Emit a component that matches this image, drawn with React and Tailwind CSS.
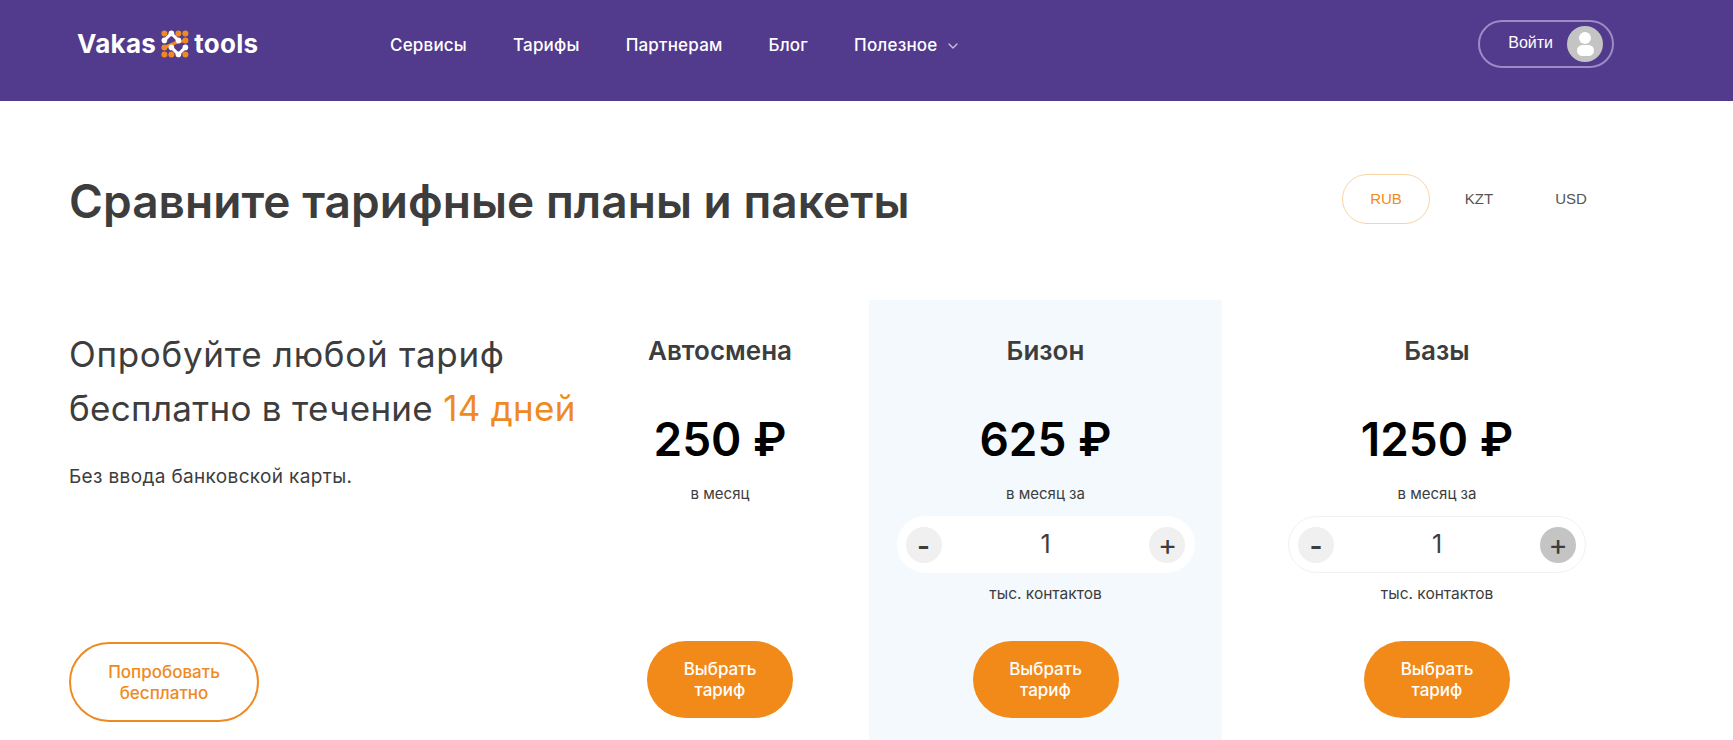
import { ChevronDown } from 'lucide-react';

const navItems = ['Сервисы', 'Тарифы', 'Партнерам', 'Блог'];

// Логотип: оранжевые точки, белые уголки сверху и снизу, оранжевая связь в центре
const LogoMark = () => {
  const orange = [
    [3.4, 3.4], [17.4, 3.4], [24.4, 3.4], [24.4, 10.4], [3.4, 17.4], [3.4, 24.4], [10.4, 24.4], [24.4, 24.4],
  ];
  const white = [
    [3.4, 10.4], [10.4, 3.4], [17.4, 10.4], [10.4, 17.4], [17.4, 24.4], [24.4, 17.4],
  ];
  return (
    <svg width="28" height="28" viewBox="0 0 28 28" className="mx-[5px] shrink-0">
      <path d="M24.4 10.4 L14 13 L3.4 17.4" stroke="#ef8a22" strokeWidth="3" fill="none" />
      <path d="M3.4 10.4 L10.4 3.4 L17.4 10.4 M10.4 17.4 L17.4 24.4 L24.4 17.4" stroke="#fff" strokeWidth="3" fill="none" />
      {orange.map(([x, y]) => (
        <circle key={`o${x}${y}`} cx={x} cy={y} r="3" fill="#ef8a22" />
      ))}
      {white.map(([x, y]) => (
        <circle key={`w${x}${y}`} cx={x} cy={y} r="2.8" fill="#fff" />
      ))}
    </svg>
  );
};

const Stepper = ({ active = false, border = false }) => (
  <div className={`mt-[10px] flex h-[57px] w-[298px] items-center justify-between rounded-full bg-white px-[9px] ${border ? 'border border-[#f1f1f1]' : ''}`}>
    <span className="flex h-9 w-9 items-center justify-center rounded-full bg-[#f0f0f0] pt-[3px] text-[28px] font-semibold leading-none text-[#3d3d3d]">-</span>
    <span className="text-[25px] text-[#3d3d3d]">1</span>
    <span className={`flex h-9 w-9 items-center justify-center rounded-full text-[29px] leading-none text-[#3d3d3d] ${active ? 'bg-[#c4c4c4]' : 'bg-[#f0f0f0]'}`}>+</span>
  </div>
);

const SelectButton = () => (
  <button className="h-[77px] w-[146px] rounded-full bg-[#f28a1a] pt-[1px] text-[17px] font-medium leading-[21px] text-white">
    Выбрать<br />тариф
  </button>
);

const PlanColumn = ({ name, price, per, stepper, active, border, highlight }) => (
  <div className={`flex h-[440px] flex-col items-center ${highlight ? 'bg-[#f3f9fc]' : ''}`}>
    <h3 className="mt-[36px] h-[30px] text-[26px] font-semibold leading-[30px] text-[#3d3d3d]">{name}</h3>
    <div className="mt-[43px] h-[60px] text-[46px] font-semibold leading-[60px] text-black">{price} ₽</div>
    <div className="mt-[13px] h-[24px] text-[15px] leading-[24px] text-[#3d3d3d]">{per}</div>
    {stepper ? (
      <>
        <Stepper active={active} border={border} />
        <div className="mt-[9px] h-[24px] text-[15.5px] leading-[24px] text-[#3d3d3d]">тыс. контактов</div>
      </>
    ) : (
      <div className="h-[100px]" />
    )}
    <div className="mt-[35px]">
      <SelectButton />
    </div>
  </div>
);

export default function App() {
  return (
    <div className="h-[740px] overflow-hidden bg-white font-['Inter',sans-serif]">
      <header className="flex h-[101px] items-center bg-[#523a8c] pb-[13px] text-white">
        <div className="ml-[77px] flex w-[313px] items-center text-[26px] font-bold leading-none tracking-[0.3px]">
          <span>Vakas</span>
          <LogoMark />
          <span>tools</span>
        </div>
        <nav className="mt-[3px] flex items-center gap-[46px] text-[17px] font-medium tracking-[0.2px]">
          {navItems.map((item) => (
            <a key={item}>{item}</a>
          ))}
          <a className="flex items-center gap-[7px]">
            Полезное
            <ChevronDown size={16} className="text-[#c9bfe0]" />
          </a>
        </nav>
        <button className="ml-auto mr-[119px] flex h-[48px] w-[136px] items-center justify-end rounded-full border-2 border-[#9d8bc6] pr-[9px] font-['Liberation_Sans',sans-serif] text-[16px]">
          <span className="-mt-[3px]">Войти</span>
          <span className="ml-[14px] flex h-9 w-9 flex-col items-center justify-center rounded-full bg-[#c4c4c4]">
            <span className="h-[12px] w-[12px] rounded-full bg-white" />
            <span className="mt-[1px] h-[11px] w-[17px] rounded-full bg-white" />
          </span>
        </button>
      </header>

      <main>
        <div className="flex h-[199px] items-start pl-[69px] pr-[119px]">
          <h1 className="mt-[73px] text-[46px] font-semibold leading-[54px] tracking-[0.05px] text-[#3d3d3d]">
            Сравните тарифные планы и пакеты
          </h1>
          <div className="ml-auto mt-[73px] flex items-center font-['Liberation_Sans',sans-serif] text-[15px] text-[#555]">
            <span className="flex h-[50px] w-[88px] items-center justify-center rounded-full border border-[#f9d3a8] text-[#ef8a22]">RUB</span>
            <span className="flex h-[50px] w-[98px] items-center justify-center">KZT</span>
            <span className="flex h-[50px] w-[86px] items-center justify-center">USD</span>
          </div>
        </div>

        <div className="grid grid-cols-[502px_298px_353px_430px] pl-[69px]">
          <div className="flex h-[440px] flex-col items-start">
            <p className="mt-[27px] whitespace-nowrap text-[35px] leading-[54px] text-[#3d3d3d]">
              <span className="tracking-[0.7px]">Опробуйте любой тариф</span><br />
              <span className="tracking-[0.3px]">бесплатно в течение <span className="text-[#ef8a22]">14 дней</span></span>
            </p>
            <p className="mt-[29px] text-[19px] leading-[26px] tracking-[0.35px] text-[#3d3d3d]">Без ввода банковской карты.</p>
            <button className="mt-auto mb-[18px] h-[80px] w-[190px] rounded-full border-2 border-[#ef8a22] pt-[1px] text-[17px] font-medium leading-[21px] text-[#ef8a22]">
              Попробовать<br />бесплатно
            </button>
          </div>
          <PlanColumn name="Автосмена" price="250" per="в месяц" />
          <PlanColumn name="Бизон" price="625" per="в месяц за" stepper highlight />
          <PlanColumn name="Базы" price="1250" per="в месяц за" stepper active border />
        </div>
      </main>
    </div>
  );
}
